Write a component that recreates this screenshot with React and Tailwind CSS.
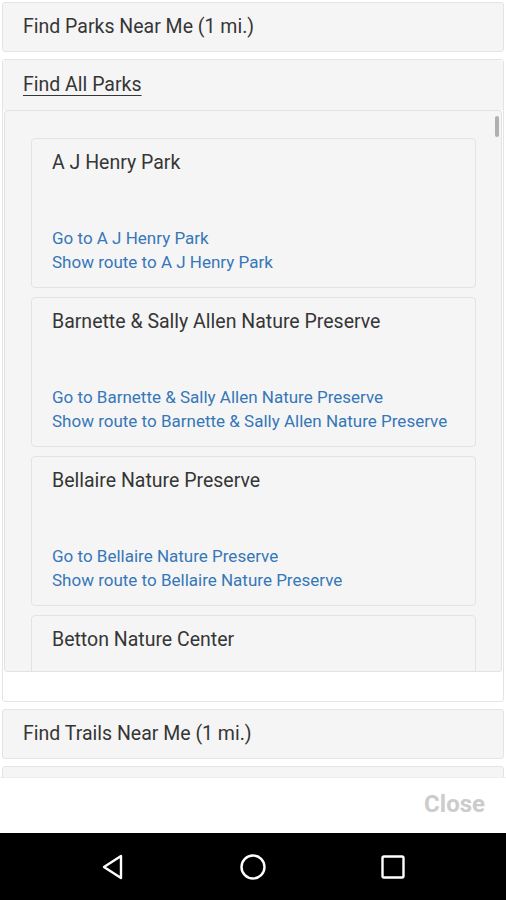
import React from 'react';

const PARKS = [
  'A J Henry Park',
  'Barnette & Sally Allen Nature Preserve',
  'Bellaire Nature Preserve',
  'Betton Nature Center',
];

function Section({ title }) {
  return (
    <div className="mx-[2px] h-[50px] shrink-0 flex items-center px-[20px] bg-[#f5f5f5] border border-[#e4e4e4] rounded-[3px] text-[19.5px] text-[#363636]">
      {title}
    </div>
  );
}

// last card is cut off by the scroll area, so its links are never visible
function ParkCard({ name, clipped }) {
  return (
    <div className="h-[150px] shrink-0 bg-[#f5f5f5] border border-[#e2e2e2] rounded-[4px] px-[20px] pt-[11px] pb-[13px] flex flex-col justify-between">
      <div className="text-[19.5px] leading-[26px] text-[#363636]">{name}</div>
      {!clipped && (
        <div className="text-[17px] leading-[24px] text-[#3677b8]">
          <div>Go to {name}</div>
          <div>Show route to {name}</div>
        </div>
      )}
    </div>
  );
}

export default function App() {
  return (
    <div className="w-[506px] h-[900px] bg-white flex flex-col overflow-hidden" style={{ fontFamily: 'Roboto, "Noto Sans", sans-serif' }}>
      {/* Scrollable list */}
      <div className="h-[777px] shrink-0 overflow-hidden pt-[2px] flex flex-col gap-[7px]">
        <Section title="Find Parks Near Me (1 mi.)" />

        <div className="mx-[2px] h-[643px] shrink-0 bg-white border border-[#e4e4e4] rounded-[3px] flex flex-col">
          <div className="h-[50px] shrink-0 flex items-center px-[20px] bg-[#f5f5f5] text-[19.5px] text-[#363636]">
            <span className="underline underline-offset-[4px] decoration-[1px]">Find All Parks</span>
          </div>
          <div className="relative mx-[1px] h-[562px] shrink-0 bg-[#f5f5f5] border border-[#e2e2e2] rounded-[3px] overflow-hidden">
            <div className="flex flex-col gap-[9px] pl-[26px] pr-[25px] pt-[27px]">
              {PARKS.map((p, i) => <ParkCard key={p} name={p} clipped={i === PARKS.length - 1} />)}
            </div>
            <div className="absolute right-[2px] top-[5px] w-[4px] h-[21px] rounded-[2px] bg-[#b0b0b0]" />
          </div>
        </div>

        <Section title="Find Trails Near Me (1 mi.)" />
        <div className="mx-[2px] h-[50px] shrink-0 bg-[#f5f5f5] border border-[#e4e4e4] rounded-[3px]" />
      </div>

      {/* Footer */}
      <div className="h-[56px] shrink-0 flex items-center justify-end pr-[21px] pb-[4px] border-t border-[#eeeeee]">
        <span className="text-[24px] font-bold text-[#cccccc]">Close</span>
      </div>

      {/* Nav bar */}
      <div className="h-[67px] shrink-0 bg-black flex items-center justify-center gap-[112px]">
        <svg width="28" height="28" viewBox="0 0 28 28" fill="none" stroke="white" strokeWidth="2.4" strokeLinejoin="round">
          <path d="M22 3 L22 25 L5 14 Z" />
        </svg>
        <svg width="28" height="28" viewBox="0 0 28 28" fill="none" stroke="white" strokeWidth="2.4">
          <circle cx="14" cy="14" r="11.5" />
        </svg>
        <svg width="28" height="28" viewBox="0 0 28 28" fill="none" stroke="white" strokeWidth="2.4">
          <rect x="3.5" y="3.5" width="21" height="21" rx="1.5" />
        </svg>
      </div>
    </div>
  );
}
